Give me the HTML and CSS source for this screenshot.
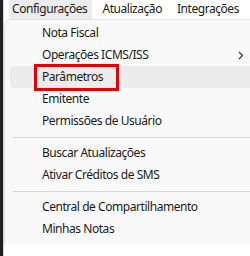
FILE: index.html
```html
<!DOCTYPE html>
<html lang="pt-BR">
<head>
    <meta charset="UTF-8">
    <title>Configurações</title>
    <link rel="stylesheet" href="styles.css">
</head>
<body>
    <div class="window">
        <div class="edge"></div>
        <div class="main">
            <div class="menubar">
                <span class="top-item active">Configurações</span>
                <span class="top-item">Atualização</span>
                <span class="top-item">Integrações</span>
            </div>
            <div class="dropdown">
                <div class="item">Nota Fiscal</div>
                <div class="item has-sub">Operações ICMS/ISS
                    <svg class="chevron" width="6" height="9" viewBox="0 0 6 9"><path d="M1 1 L4.5 4.5 L1 8" fill="none" stroke="#333" stroke-width="1.2"/></svg>
                </div>
                <div class="item hover"><span class="marked">Parâmetros</span></div>
                <div class="item">Emitente</div>
                <div class="item">Permissões de Usuário</div>
                <div class="sep"></div>
                <div class="item">Buscar Atualizações</div>
                <div class="item">Ativar Créditos de SMS</div>
                <div class="sep"></div>
                <div class="item">Central de Compartilhamento</div>
                <div class="item">Minhas Notas</div>
            </div>
        </div>
    </div>
</body>
</html>
```

FILE: styles.css
```css
body {
    margin: 0;
    background-color: white;
    font-family: "Noto Sans", Arial, sans-serif;
    font-size: 12px;
    letter-spacing: -0.45px;
    color: #1a1a1a;
}
.window {
    display: flex;
    height: 256px;
    overflow: hidden;
}
.edge {
    width: 3px;
    flex-shrink: 0;
    background-color: #202020;
}
.main {
    flex: 1;
    min-width: 0;
    border-left: 1px solid #d4d4d4;
}
.menubar {
    height: 19px;
    display: flex;
    padding-left: 5px;
    background-color: white;
    white-space: nowrap;
}
.top-item {
    padding: 0 5px 0 3px;
    line-height: 18px;
    margin-right: 7px;
}
.top-item.active {
    background-color: #ececec;
}
.dropdown {
    background-color: #f9f9f9;
    border-top: 1px solid #e3e3e3;
    border-left: 1px solid #e3e3e3;
    border-top-left-radius: 7px;
    padding: 2px 0 3px 0;
    height: 219px;
}
.item {
    height: 22px;
    line-height: 22px;
    margin-left: 5px;
    padding-left: 32px;
    border-radius: 4px 0 0 4px;
    position: relative;
    white-space: nowrap;
}
.item.hover {
    background-color: #ececec;
}
.chevron {
    position: absolute;
    right: 6px;
    top: 7px;
}
.marked {
    display: inline-block;
    position: relative;
}
/* caixa vermelha de destaque */
.marked::after {
    content: "";
    position: absolute;
    left: -8px;
    right: -16px;
    top: -2px;
    bottom: -3px;
    border: 3px solid #e60000;
}
.sep {
    height: 1px;
    background-color: #d6d6d6;
    margin: 5px 0 4px 8px;
}
```
